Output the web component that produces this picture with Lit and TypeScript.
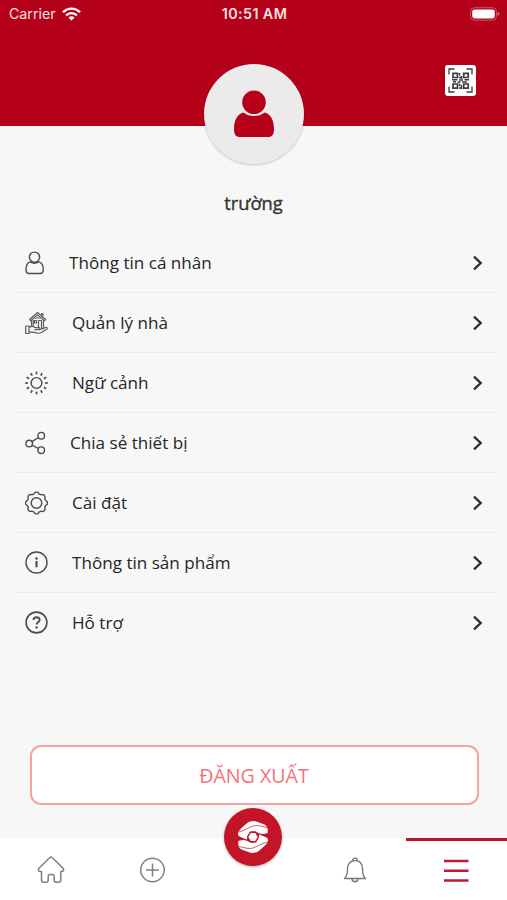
import { LitElement, html, css, svg } from "lit";
import { customElement } from "lit/decorators.js";

const line = (w: number, h: number, body: unknown) => html`<svg
  width=${w} height=${h} viewBox="0 0 ${w} ${h}" fill="none" stroke="#4c4c4c"
  stroke-width="1.4" stroke-linecap="round" stroke-linejoin="round">${body}</svg>`;

const person = line(20, 24, svg`
  <circle cx="9.5" cy="6.2" r="5.1"/>
  <path d="M5.2 10.9C2.3 11.8 1 14.4 1 18.5C1 21.3 2 22.5 4 22.5H15C17.2 22.5 18.3 21.3 18.3 18.5C18.3 14.4 17 11.8 13.8 10.9C11.3 12.5 7.7 12.5 5.2 10.9Z"/>`);

const houseHand = line(23, 24, svg`
  <g stroke-width="1.2" stroke="#5c5c5c">
    <path d="M4.5 8.5L12.5 1.5L20.7 8.5L19.5 9.7L12.5 3.9L5.7 9.7Z"/>
    <path d="M6.5 9.5V15.5M18.5 9.5V18M8.2 9V15.5M9.5 9.5H11.5V12H9.5ZM13.5 9.5H16.5V17.5M13.5 9.5V17M10 7H15M16.5 3.5V2.5H18V5"/>
    <path d="M0.7 15H4V22.5H0.7ZM4 16.5C6.5 14.8 8.5 15.3 10 16.7H14C15.5 17 15.3 18.7 13.8 18.7H10M15 18.5L20.5 16.5C22 16.1 22.8 17.4 21.7 18.2L16.5 21.5C15.5 22.1 14 22.3 12.5 22.2L8 21.2H4"/>
  </g>`);

const sun = line(23, 24, svg`
  <circle cx="11.5" cy="12" r="5.4"/>
  ${Array.from({ length: 12 }, (_, i) => svg`<path stroke-linecap="butt" stroke-width="1.7" d="M11.5 3.4V0.7" transform="rotate(${i * 30} 11.5 12)"/>`)}`);

const share = line(21, 24, svg`
  <circle cx="4.2" cy="12.5" r="3.3"/><circle cx="16.2" cy="4.7" r="3.3"/>
  <circle cx="16.2" cy="19.2" r="3.3"/>
  <path d="M7 10.7L13.4 6.5M7.1 14.1L13.3 17.5"/>`);

const gearPath = () => {
  const n = 96;
  const pts = Array.from({ length: n }, (_, i) => {
    const a = (i / n) * Math.PI * 2;
    const wave = Math.tanh(1.8 * Math.cos(8 * a)) / Math.tanh(1.8);
    const r = 10.1 + wave * 0.8;
    return `${(11.5 + r * Math.sin(a)).toFixed(2)} ${(12 - r * Math.cos(a)).toFixed(2)}`;
  });
  return `M${pts.join("L")}Z`;
};
const gear = line(23, 24, svg`<path d=${gearPath()}/><circle cx="11.5" cy="12" r="5.3"/>`);

const info = line(23, 24, svg`<circle cx="11.5" cy="11.5" r="10.5"/>
  <path d="M11.5 10V16.3" stroke-width="2.1" stroke-linecap="butt"/>
  <circle cx="11.5" cy="7.4" r="1.25" fill="#4c4c4c" stroke="none"/>`);

const help = line(23, 24, svg`<circle cx="11.5" cy="11.5" r="10.4" stroke-width="1.6"/>
  <path d="M8.5 9C8.6 5.3 14.6 5.4 14.6 8.9C14.6 11.1 11.6 11.1 11.6 13.6" stroke-width="1.9" stroke-linecap="butt"/>
  <circle cx="11.6" cy="16.4" r="1.2" fill="#4c4c4c" stroke="none"/>`);

const rows = [
  { icon: person, label: "Thông tin cá nhân" },
  { icon: houseHand, label: "Quản lý nhà" },
  { icon: sun, label: "Ngữ cảnh" },
  { icon: share, label: "Chia sẻ thiết bị" },
  { icon: gear, label: "Cài đặt" },
  { icon: info, label: "Thông tin sản phẩm" },
  { icon: help, label: "Hỗ trợ" },
];

const logoHalf = (angle: number) => svg`
  <g transform="rotate(${angle} 29 29)">
    <path d="M14 26.5Q13.7 23.5 17 20.5L23.500 14.700Q25 13.400 28 13.200Q30.500 12.800 33 13.800L40.500 16.500Q43.500 18 43.700 21V25Q39 26.500 35.500 25.500L32.500 24Q29 22.300 26 24.500L24 29L22.500 31.500L16 28.800Q14.200 28 14 26.500Z"/>
    <path d="M15 23.800Q19 23 22.500 21L28 18.300Q31 17 35 17.700L43 19.500" fill="none" stroke="#c41428" stroke-width="0.700"/>
  </g>`;

@customElement("app-root")
export class AppRoot extends LitElement {
  static styles = css`
    :host {
      display: flex;
      flex-direction: column;
      height: 900px;
      background: #f7f7f7;
      color: #262626;
      font-family: "Open Sans", "Noto Sans", sans-serif;
      overflow: hidden;
    }
    svg { display: block; flex: none; }
    .header {
      height: 125.5px;
      flex: none;
      background: #b50019;
      display: flex;
      flex-direction: column;
    }
    .status {
      height: 27px;
      padding: 0 7px 0 9px;
      display: grid;
      grid-template-columns: 1fr auto 1fr;
      align-items: center;
      color: #fbe0e3;
      font: 500 14.5px/27px Inter, sans-serif;
    }
    .carrier { display: flex; align-items: center; gap: 6px; font-weight: 400; font-size: 14.2px; }
    .time { font-weight: 600; font-size: 14.3px; letter-spacing: 0.4px; }
    .battery { justify-self: end; }
    .qr {
      align-self: flex-end;
      margin: 38px 31px 0 0;
      width: 31px;
      height: 31px;
      border-radius: 3px;
      background: #fff;
    }
    .avatar {
      position: relative;
      flex: none;
      align-self: center;
      width: 100px;
      height: 100px;
      margin-top: -61.5px;
      border-radius: 50%;
      background: #ebebeb;
      box-shadow: 0 1px 3px rgba(0, 0, 0, 0.2);
    }
    .name {
      flex: none;
      margin-top: 23px;
      height: 32px;
      line-height: 32px;
      text-align: center;
      font-size: 18.3px;
      color: #333;
      -webkit-text-stroke: 0.35px #333;
    }
    .menu { flex: none; margin: 14px 11px 0 13px; }
    .row {
      box-sizing: border-box;
      height: 60px;
      display: flex;
      align-items: center;
      padding: 1px 12px 0;
      border-bottom: 1px solid #ececec;
    }
    .row:last-child { border-bottom-color: transparent; }
    .label { flex: 1; margin-left: 24px; font-size: 17.1px; line-height: 24px; }
    .logout {
      flex: none;
      box-sizing: border-box;
      height: 60px;
      margin: 92px 28.5px 0 29.5px;
      border: 2px solid #f5a3a5;
      border-radius: 11px;
      background: #fff;
      color: #f07477;
      display: flex;
      align-items: center;
      justify-content: center;
      font-size: 19.6px;
    }
    .tabs {
      margin-top: auto;
      flex: none;
      height: 62px;
      display: grid;
      grid-template-columns: repeat(5, 1fr);
      background: #fff;
    }
    .tab { display: flex; justify-content: center; align-items: center; box-sizing: border-box; padding-top: 2px; }
    .tab.active { border-top: 3px solid #b8152c; padding-top: 0; }
    .hub {
      flex: none;
      align-self: flex-start;
      position: relative;
      margin-top: -32px;
      width: 58px;
      height: 58px;
      border-radius: 50%;
      background: #c41428;
      box-shadow: 0 1px 3px rgba(0, 0, 0, 0.3);
    }
  `;

  render() {
    return html`
      <div class="header">
        <div class="status">
          <div class="carrier">
            <span>Carrier</span>
            <svg width="19" height="14" viewBox="0 0 19 14" fill="none" stroke="#fff" stroke-width="2.3">
              <path d="M1 5.3C5.8 0.3 13.2 0.3 18 5.3M4.1 8.4C7.2 5.3 11.8 5.3 14.9 8.4"/>
              <path d="M6.5 10.6Q9.5 8.1 12.5 10.6L9.5 13.7Z" fill="#fff" stroke="none"/>
            </svg>
          </div>
          <span class="time">10:51 AM</span>
          <svg class="battery" width="30" height="14" viewBox="0 0 30 14">
            <rect x="0.5" y="0.7" width="26" height="12.5" rx="4" fill="none" stroke="#cf5567"/>
            <rect x="2.2" y="2.4" width="22.6" height="9.1" rx="2.4" fill="#fff"/>
            <path d="M27.7 5V9Q29.5 8.2 29.5 7T27.7 5Z" fill="#dc7d8a"/>
          </svg>
        </div>
        <div class="qr">
          <svg width="31" height="31" viewBox="0 0 31 31" fill="none" stroke="#3c3c3c" stroke-width="1.3">
            <path d="M4 9.5V4H9.5M21.5 4H27V9.5M27 21.5V27H21.5M9.5 27H4V21.5"/>
            <path stroke-width="1.7" d="M8 8.3H12.5V12.5H8ZM18.7 8.3H23.2V12.5H18.7ZM8 19H12.5V23.2H8ZM18.7 19H23.2V23.2H18.7Z"/>
            <path stroke-width="1.5" d="M14.5 8V10.5M16.5 11V14M14 12.5H17M7 14.8H12.5M14 15H18M19.5 14.8H24M8 16.8H11M12.5 17H15.5M17 17H22M14.6 18.5V21M16.5 20V24M14 23H16.5"/>
          </svg>
        </div>
      </div>
      <div class="avatar">
        <svg width="100" height="100" viewBox="0 0 100 100" fill="#b9001b">
          <circle cx="50" cy="38.3" r="11.8"/>
          <path d="M39.5 48.5C45.5 53.2 54.5 53.2 60.5 48.5C67 50.2 70 56.5 70 65.5C70 70.5 68 73 64 73H36C32 73 30 70.5 30 65.5C30 56.5 33 50.2 39.5 48.5Z"/>
        </svg>
      </div>
      <div class="name">trường</div>
      <div class="menu">
        ${rows.map((r) => html`
          <div class="row">
            ${r.icon}<span class="label">${r.label}</span>
            <svg width="12" height="16" viewBox="0 0 12 16" fill="none" stroke="#2e2e2e" stroke-width="2.3">
              <path d="M2 1.7L8.7 8L2 14.3"/>
            </svg>
          </div>`)}
      </div>
      <div class="logout">ĐĂNG XUẤT</div>
      <div class="tabs">
        <div class="tab">
          <svg width="28" height="28" viewBox="0 0 28 28" fill="none" stroke="#808080" stroke-width="1.5" stroke-linejoin="round">
            <path d="M12.6 1.7Q14 0.5 15.4 1.7L26 12.3C27.5 14.2 26 16 23.8 15.5V24Q23.8 26.2 21.8 26.2H19.2Q17.2 26.2 17.2 24V20.5Q17.2 18.5 15.5 18.5H13Q11.2 18.5 11.2 20.5V24Q11.2 26.2 9.2 26.2H6.5Q4.5 26.2 4.5 24V15.5C2 16 0.5 14.2 2 12.3Z"/>
          </svg>
        </div>
        <div class="tab">
          <svg width="26" height="26" viewBox="0 0 26 26" fill="none" stroke="#808080" stroke-width="1.5">
            <circle cx="13.5" cy="13" r="11.8"/><path d="M13.5 6.5V19.5M7 13H20"/>
          </svg>
        </div>
        <div class="tab">
          <div class="hub">
            <svg width="58" height="58" viewBox="0 0 58 58" fill="#fff">
              ${logoHalf(0)}${logoHalf(180)}
              <path d="M26.3 24.3H31.7L34.4 29L31.7 33.7H26.3L23.6 29Z" stroke="#c41428" stroke-width="1.4"/>
            </svg>
          </div>
        </div>
        <div class="tab">
          <svg width="24" height="26" viewBox="0 0 24 26" fill="none" stroke="#777" stroke-width="1.4" stroke-linejoin="round">
            <path d="M1.5 21.5C4 19.5 4.5 17.5 4.5 12C4.5 6.5 7.5 3.6 12 3.6C16.5 3.6 19.5 6.5 19.5 12C19.5 17.5 20 19.5 22.5 21.5Z"/>
            <path d="M9.7 3.7C9.7 0.2 14.3 0.2 14.3 3.7M8.7 21.7C9.3 25.8 14.7 25.8 15.3 21.7"/>
          </svg>
        </div>
        <div class="tab active">
          <svg width="26" height="26" viewBox="0 0 26 26" fill="none" stroke="#c41a30" stroke-width="2.4">
            <path d="M1 3H25.5M1 12.8H25.5M1 22.5H25.5"/>
          </svg>
        </div>
      </div>
    `;
  }
}
